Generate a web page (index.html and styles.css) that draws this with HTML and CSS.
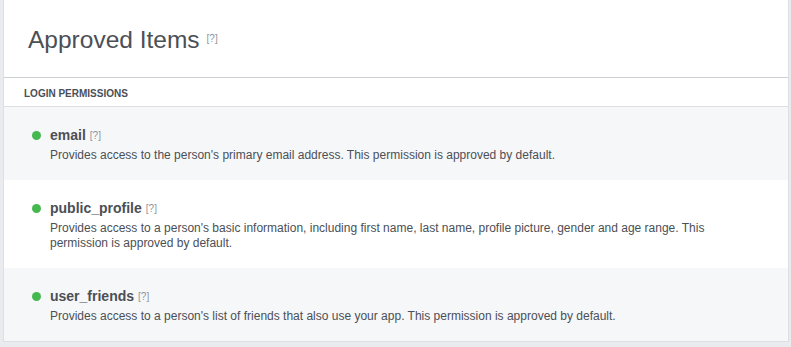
FILE: index.html
```html
<!DOCTYPE html>
<html lang="en">
<head>
  <meta charset="UTF-8">
  <title>Approved Items</title>
  <link rel="stylesheet" href="styles.css">
</head>
<body>
  <div class="card">
    <div class="card-header">
      <h1>Approved Items</h1>
      <span class="help help-lg">[?]</span>
    </div>

    <div class="section-label">Login Permissions</div>

    <div class="perm shaded">
      <div class="perm-title">
        <span class="dot"></span>
        <span class="perm-name">email</span>
        <span class="help">[?]</span>
      </div>
      <p class="perm-desc">Provides access to the person's primary email address. This permission is approved by default.</p>
    </div>

    <div class="perm">
      <div class="perm-title">
        <span class="dot"></span>
        <span class="perm-name">public_profile</span>
        <span class="help">[?]</span>
      </div>
      <p class="perm-desc">Provides access to a person's basic information, including first name, last name, profile picture, gender and age range. This permission is approved by default.</p>
    </div>

    <div class="perm shaded">
      <div class="perm-title">
        <span class="dot"></span>
        <span class="perm-name">user_friends</span>
        <span class="help">[?]</span>
      </div>
      <p class="perm-desc">Provides access to a person's list of friends that also use your app. This permission is approved by default.</p>
    </div>
  </div>
</body>
</html>
```

FILE: styles.css
```css
body {
  margin: 0;
  padding: 0 2px 4px 3px;
  background: #e9ebee;
  font-family: "Liberation Sans", Arial, Helvetica, sans-serif;
  color: #4b4f56;
}
.card {
  background: white;
  border: 1px solid #dddfe2;
  border-top: none;
}
.card-header {
  height: 77px;
  display: flex;
  align-items: center;
  padding-left: 24px;
  border-bottom: 1px solid #ccd0d5;
}
h1 {
  margin: 0;
  font-size: 24.5px;
  font-weight: normal;
  color: #4b4f56;
  line-height: 28px;
  padding-top: 3px;
}
.help {
  font-size: 10px;
  color: #90949c;
  margin-left: 4px;
}
.help-lg {
  margin-left: 7px;
}
.section-label {
  height: 25px;
  line-height: 25px;
  padding: 3px 0 0 20px;
  font-size: 10px;
  font-weight: bold;
  text-transform: uppercase;
  border-bottom: 1px solid #dddfe2;
}
.perm {
  padding: 19px 40px 17px 28px;
}
.perm.shaded {
  background: #f6f7f9;
}
.perm-title {
  display: flex;
  align-items: center;
  height: 18px;
}
.dot {
  width: 9px;
  height: 9px;
  border-radius: 50%;
  background: #45b94f;
  margin-right: 9px;
}
.perm-name {
  font-size: 14px;
  font-weight: bold;
}
.perm-desc {
  margin: 4px 0 0 18px;
  font-size: 12px;
  line-height: 15px;
  color: #4b4f56;
  max-width: 690px;
}
```
